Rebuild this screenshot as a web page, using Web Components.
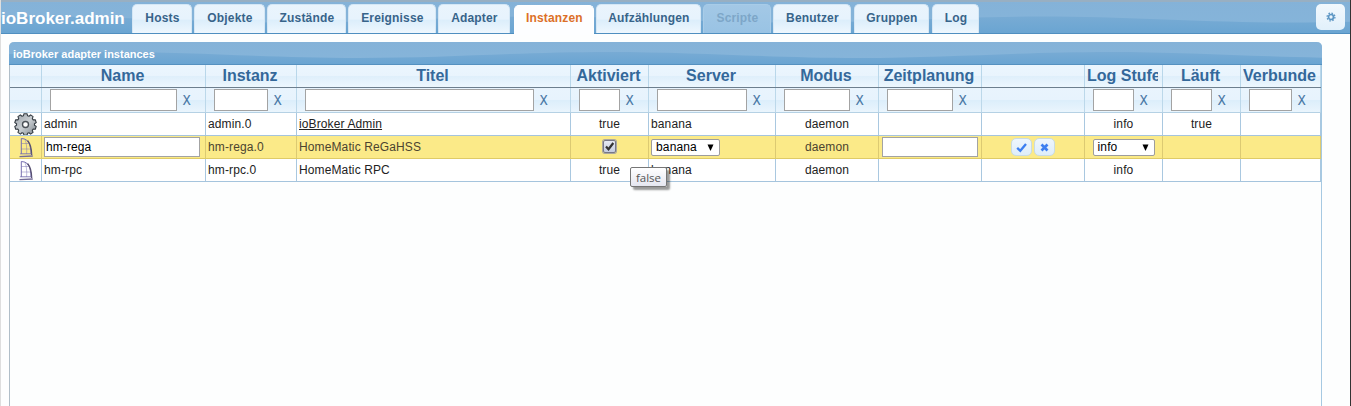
<!DOCTYPE html>
<html lang="de">
<head>
<meta charset="utf-8">
<title>ioBroker.admin</title>
<style>
html,body{margin:0;height:100%;overflow:hidden;background:#fdfefe;font-family:"Liberation Sans",Arial,sans-serif}
</style>
</head>
<body>
<io-app></io-app>
<script>
const define = (name, html, setup) => customElements.define(name, class extends HTMLElement {
  connectedCallback() {
    if (this.shadowRoot) return;
    const root = this.attachShadow({ mode: 'open' });
    const t = document.createElement('template');
    t.innerHTML = typeof html === 'function' ? html(this) : html;
    root.append(t.content.cloneNode(true));
    if (setup) setup(this, root);
  }
});

define('gloss-wave', el => {
  const h = +el.getAttribute('h'), a = +el.getAttribute('hi'), b = +el.getAttribute('lo'), s = +el.getAttribute('start');
  let d = `M${s} ${b}`;
  for (let x = s; x < 1351; x += 500) d += ` C${x+90} ${b} ${x+160} ${a} ${x+250} ${a} S${x+410} ${b} ${x+500} ${b}`;
  return `<style>:host{position:absolute;inset:0;display:block;overflow:hidden;z-index:0}svg{display:block}</style>
  <svg width="1400" height="${h}"><defs><linearGradient id="g" x2="0" y2="1"><stop stop-color="#84b2d8"/><stop offset="1" stop-color="#86b5da"/></linearGradient>
  <linearGradient id="k" x2="0" y2="1"><stop stop-color="#78abd4"/><stop offset="1" stop-color="#6aa5d2"/></linearGradient></defs>
  <rect width="1400" height="${h}" fill="url(#g)"/><path d="${d} V${h} H${s}Z" fill="url(#k)"/></svg>`;
});

define('nav-tab', `<style>
:host{display:block;box-sizing:border-box;height:29px;margin-top:4px;border-radius:5px 5px 0 0;text-align:center;
 font:bold 12px/26px "Liberation Sans",Arial,sans-serif;color:#38648a;white-space:nowrap;letter-spacing:.17px;text-indent:.8px;
 background:linear-gradient(#eaf4fc,#e7f3fd 50%,#dceefb 55%,#eef7fe);border:1px solid #d5e7f5;border-bottom:0}
:host([active]){height:30px;margin-top:5px;line-height:24px;background:#fdfeff;border-color:#fff;color:#dc7028}
:host([disabled]){background:linear-gradient(#a3c8e6,#99c3e4);border-color:#a8cce8;color:#7da6c8}
</style><slot></slot>`);

define('tab-bar', `<style>
:host{display:flex;position:relative;height:33px;margin:0 1px;border-bottom:1px solid #4f8fc0}
.edge{position:absolute;inset:0 0 auto;height:2px;background:#98afc2}
h1{position:relative;margin:0;width:131px;font:bold 17px/37px "Liberation Sans",Arial,sans-serif;color:#fff;white-space:nowrap}
h1 span{display:inline-block}
nav{display:flex;position:relative;flex:1}
.cfg{position:relative;width:29px;height:26px;margin:4px 5px 0 0;border-radius:5px;background:linear-gradient(#f2f8fd,#e1f0fb);display:flex;align-items:center;justify-content:center}
</style><gloss-wave h="33" hi="16.5" lo="22.5" start="-210"></gloss-wave><div class="edge"></div>
<h1><span>ioBroker.admin</span></h1><nav><slot></slot></nav>
<div class="cfg"><svg width="10" height="10" viewBox="0 0 10 10"><circle cx="5" cy="5" r="2.5" fill="none" stroke="#5c96c4" stroke-width="1.7"/><circle cx="5" cy="5" r="3.9" fill="none" stroke="#5c96c4" stroke-width="1.3" stroke-dasharray="1.55 1.51"/></svg></div>`);

define('gear-icon', `<style>:host{display:block}svg{display:block}</style>
<svg width="23" height="23" viewBox="-11.5 -11.5 23 23"><defs><linearGradient id="m" x2="1" y2="1"><stop stop-color="#9ba2a9"/><stop offset=".5" stop-color="#c9ced2"/><stop offset="1" stop-color="#7c848c"/></linearGradient></defs><path fill="url(#m)" stroke="#343b42" stroke-width="1.1" stroke-linejoin="round"/><circle r="3" fill="#fff" stroke="#4a5056" stroke-width="1.4"/></svg>`,
(el, root) => {
  let p = [];
  for (let i = 0; i < 10; i++) for (const [o, r] of [[-13, 9], [-8, 10.9], [8, 10.9], [13, 9]]) {
    const a = (i * 36 - 90 + o) * Math.PI / 180;
    p.push((r * Math.cos(a)).toFixed(2) + ' ' + (r * Math.sin(a)).toFixed(2));
  }
  root.querySelector('path').setAttribute('d', 'M' + p.join('L') + 'Z');
});

define('sail-icon', `<style>:host{display:block}svg{display:block}</style>
<svg width="16" height="21" viewBox="0 0 16 21" fill="none" stroke="#7770b0"><path d="M3.3 1.5V17M3.3 1.5L6.5 2C10.5 3.5 12.8 8 13 17" stroke-width="1"/><path d="M6.8 2C8.6 6 9 11 8.6 17M3.3 6.5H10.5M3.3 12H12.5" stroke-width=".8" opacity=".6"/><path d="M9.5 3.5C12.5 7 13.6 12 13.7 18" stroke="#575070" stroke-width="1.3"/><path d="M2.2 16.8H13.5" stroke-width=".9"/><path d="M1.5 19.6L14.8 19" stroke="#756d98" stroke-width="1.3"/></svg>`);

define('text-field', `<style>:host{display:block;box-sizing:border-box;height:22px;background:#fff;border:1px solid #a3a3a3;
 font:12px/18px "Liberation Sans",Arial,sans-serif;letter-spacing:.1px;color:#000;padding:0 1px;white-space:nowrap}</style><slot></slot>`);

define('filter-field', `<style>:host{display:flex;height:24px;padding:1px 0 0 8px;box-sizing:border-box}
text-field{width:var(--w)}b{font:14px/22px "Liberation Sans",Arial,sans-serif;color:#40719f;width:20px;text-align:center}b i{display:inline-block;font-style:normal;transform:scaleX(.84);-webkit-text-stroke:.2px #40719f}</style>
<text-field></text-field><b><i>X</i></b>`);

define('select-field', `<style>:host{display:flex;align-items:center;justify-content:space-between;box-sizing:border-box;height:17px;background:#fff;
 border:1px solid #9d9d9d;border-radius:2px;padding:0 4px;font:12px/15px "Liberation Sans",Arial,sans-serif;letter-spacing:.15px;color:#000}
svg{display:block;margin-right:1px}</style><span><slot></slot></span><svg width="7" height="7"><path d="M.5 .5H6.5L3.5 7Z"/></svg>`);

define('check-box', `<style>:host{display:block;width:13px;height:13px;margin-bottom:2px;box-sizing:border-box;border:1px solid #778;border-radius:2px;
 background:linear-gradient(#e6e9f2,#c5cce0);box-shadow:0 0 0 1px #aaa79f}svg{display:block}</style>
<svg width="11" height="11"><path d="M2 5.5L4.5 8.2L9.3 2" fill="none" stroke="#333" stroke-width="2.2"/></svg>`);

define('icon-button', el => `<style>:host{display:flex;align-items:center;justify-content:center;box-sizing:border-box;width:21px;height:18px;border-radius:5px;
 border:1px solid #c9dbe2;background:linear-gradient(#eef6fd,#deedfa)}svg{display:block}</style>
<svg width="11" height="11" fill="none" stroke="#3d7ff0">${el.getAttribute('kind') === 'ok'
 ? '<path d="M1.2 5.8L4.3 8.8L10 2" stroke-width="2.3"/>' : '<path d="M2.5 2.5L8.5 8.5M8.5 2.5L2.5 8.5" stroke-width="2.7"/>'}</svg>`);

define('tip-box', `<style>:host{position:absolute;left:630px;top:167px;width:37px;height:20px;box-sizing:border-box;border:1px solid #767676;border-radius:2px;
 background:linear-gradient(#fff,#e5e6f0);box-shadow:3px 3px 2px rgba(0,0,0,.4);font:11.5px/19px "Open Sans","Noto Sans",sans-serif;color:#555;text-align:center;z-index:3}</style><slot></slot>`);

define('data-row', `<style>
:host{display:grid;grid-template-columns:32px 164px 91px 274px 78px 127px 103px 103px 103px 78px 78px 80px;height:22px;border-bottom:1px solid #a5c4dd;
 font:12px/22px "Liberation Sans",Arial,sans-serif;letter-spacing:.12px;color:#222;--line:#a9c8e0}
:host([kind=head]){border-bottom-color:#6d7f8e;font:bold 16px/21px "Liberation Sans",Arial,sans-serif;letter-spacing:0;color:#34689a;--line:#b9d7ea;background:linear-gradient(#ebf6fe,#e9f4fd 49%,#dfeffb 52%,#edf7fe)}
:host([kind=filter]){height:24px;border-bottom-color:#b5d1e4;--line:#bcd8ea;background:linear-gradient(#e9f4fd,#e7f3fd 49%,#dceefb 52%,#eaf5fd)}
:host([kind=hot]){background:#fbea88;border-bottom-color:#dfcb67;color:#4b4430;--line:#dcca72}
::slotted(*){box-sizing:border-box;border-right:1px solid var(--line);overflow:hidden;white-space:nowrap;padding-left:2px;min-width:0}
::slotted(.c){text-align:center;padding-left:0}
::slotted(.x){display:flex;align-items:center;justify-content:center;padding-left:0}
::slotted(.f){padding-left:0}
</style><slot></slot>`);

define('data-grid', `<style>
:host{display:block;position:relative;box-sizing:border-box;width:1313px;height:364px;margin:8px 0 0 9px;border:1px solid #a6c9e2;border-left-color:#b0bec8;border-top:0;border-bottom:0;border-radius:5px 5px 0 0;background:#fdfefe}
header{position:relative;height:22px;margin:0 -1px;border-bottom:1px solid #5591c0;border-radius:5px 5px 0 0;overflow:hidden;font:bold 11px/24px "Liberation Sans",Arial,sans-serif;color:#fff}
header span{position:relative;margin-left:4px}
.rows{background:#fff}
</style><header><gloss-wave h="22" hi="10" lo="16" start="-150"></gloss-wave><span>ioBroker adapter instances</span></header><div class="rows"><slot></slot></div>`);

const tabs = [['Hosts',60,0],['Objekte',71,2],['Zustände',79,2],['Ereignisse',88,2],['Adapter',72,2],['Instanzen',80,4,'active'],['Aufzählungen',105,2],['Scripte',68,2,'disabled'],['Benutzer',78,2],['Gruppen',75,3],['Log',47,3]];
const heads = ['','Name','Instanz','Titel','Aktiviert','Server','Modus','Zeitplanung','','Log Stufe','Läuft','Verbunden'];
const filters = [0,127,54,229,41,90,66,66,0,41,41,43];
const C = s => `<span class="c">${s}</span>`, L = s => `<span>${s}</span>`, X = s => `<span class="x">${s}</span>`;

define('io-app', `<style>
:host{display:block;position:relative;height:406px;overflow:hidden;border-left:1px solid #dedede;border-right:1px solid #333;box-sizing:border-box;margin:0;background:#fdfefe}
.wrap{margin-left:-1px}
tab-bar{margin-right:0}
data-row span.h{padding:0 4px 0 2px}
data-row span.h i{display:block;overflow:hidden;font-style:normal}
.row-field{margin:1px 0 0 2px;height:20px}
tip-box{margin-left:-1px}
</style><div class="wrap"><tab-bar>${tabs.map(([n,w,g,k]) => `<nav-tab ${k||''} style="width:${w}px;margin-left:${g}px">${n}</nav-tab>`).join('')}</tab-bar>
<data-grid>
<data-row kind="head">${heads.map(h => `<span class="c h"><i>${h}</i></span>`).join('')}</data-row>
<data-row kind="filter">${filters.map(w => `<span class="f">${w ? `<filter-field style="--w:${w}px"></filter-field>` : ''}</span>`).join('')}</data-row>
<data-row>${X('<gear-icon></gear-icon>')+L('admin')+L('admin.0')+L('<u>ioBroker Admin</u>')+C('true')+L('banana')+C('daemon')+C('')+C('')+C('info')+C('true')+C('')}</data-row>
<data-row kind="hot">${X('<sail-icon></sail-icon>')}<span><text-field class="row-field" style="width:156px;margin-left:0"><span>hm-rega</span></text-field></span>${L('hm-rega.0')+L('HomeMatic ReGaHSS')+X('<check-box></check-box>')}<span><select-field style="width:69px;margin-top:3px">banana</select-field></span>${C('daemon')}<span><text-field class="row-field" style="width:96px;margin-left:1px"></text-field></span>${X('<icon-button kind="ok"></icon-button><icon-button kind="no" style="margin:0 1px 0 2px"></icon-button>')}${X('<select-field style="width:62px">info</select-field>')+C('')+C('')}</data-row>
<data-row>${X('<sail-icon></sail-icon>')+L('hm-rpc')+L('hm-rpc.0')+L('HomeMatic RPC')+C('true')+L('banana')+C('daemon')+C('')+C('')+C('info')+C('')+C('')}</data-row>
</data-grid></div><tip-box>false</tip-box>`);
</script>
</body>
</html>
